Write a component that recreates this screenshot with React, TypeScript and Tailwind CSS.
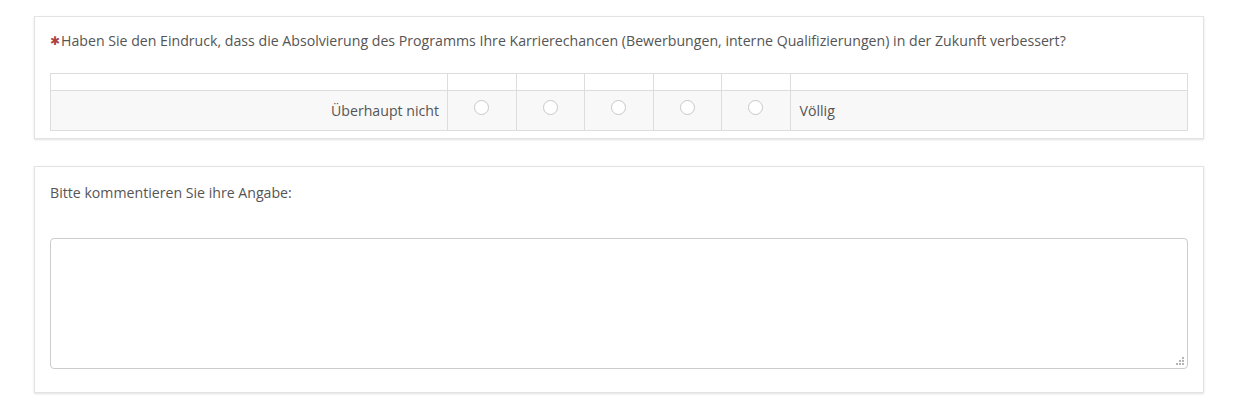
import React from 'react';

const scale = [1, 2, 3, 4, 5];

function Radio() {
  return <span className="inline-block w-[15px] h-[15px] rounded-full border border-[#c8c8c8] bg-white" />;
}

function Grip() {
  return (
    <svg className="absolute right-[4px] bottom-[4px]" width="8" height="8" viewBox="0 0 8 8" fill="#b5b5b5">
      <rect x="6" y="0" width="2" height="2" />
      <rect x="3" y="3" width="2" height="2" />
      <rect x="6" y="3" width="2" height="2" />
      <rect x="0" y="6" width="2" height="2" />
      <rect x="3" y="6" width="2" height="2" />
      <rect x="6" y="6" width="2" height="2" />
    </svg>
  );
}

export default function App() {
  return (
    <div className="min-h-[405px] bg-white px-[34px] pt-[16px] text-[14.15px] text-[#555555]" style={{ fontFamily: '"Open Sans", "Liberation Sans", sans-serif' }}>
      {/* Frage */}
      <div className="w-[1170px] border border-[#e3e3e3] bg-white shadow-[0_1px_2px_rgba(0,0,0,0.12)] px-[15px] pt-[14px] pb-[7px]">
        <p className="leading-[20px] mb-[22px] flex items-center">
          <span className="text-[#a94442] text-[12px] mr-[1px]">✱</span>
          Haben Sie den Eindruck, dass die Absolvierung des Programms Ihre Karrierechancen (Bewerbungen, interne Qualifizierungen) in der Zukunft verbessert?
        </p>
        <table className="w-[1138px] border-collapse">
          <thead>
            <tr className="h-[17px]">
              <th className="w-[397px] border border-[#dddddd] p-0" />
              {scale.map(i => (
                <th key={i} className="w-[68.5px] border border-[#dddddd] p-0" />
              ))}
              <th className="border border-[#dddddd] p-0" />
            </tr>
          </thead>
          <tbody>
            <tr className="h-[40px] bg-[#f8f8f8]">
              <td className="border border-[#dddddd] text-right pr-[8px]">Überhaupt nicht</td>
              {scale.map(i => (
                <td key={i} className="border border-[#dddddd] text-center align-middle">
                  <div className="flex justify-center -mt-[7px]"><Radio /></div>
                </td>
              ))}
              <td className="border border-[#dddddd] pl-[9px]">Völlig</td>
            </tr>
          </tbody>
        </table>
      </div>

      {/* Kommentar */}
      <div className="mt-[27px] w-[1170px] border border-[#e3e3e3] bg-white shadow-[0_1px_2px_rgba(0,0,0,0.12)] px-[15px] pt-[16px] pb-[23px]">
        <p className="leading-[20px] mb-[35px]">Bitte kommentieren Sie ihre Angabe:</p>
        <div className="relative w-[1138px]">
          <textarea className="block w-full h-[131px] resize-none rounded-[4px] border border-[#cccccc] bg-white outline-none" />
          <Grip />
        </div>
      </div>
    </div>
  );
}
